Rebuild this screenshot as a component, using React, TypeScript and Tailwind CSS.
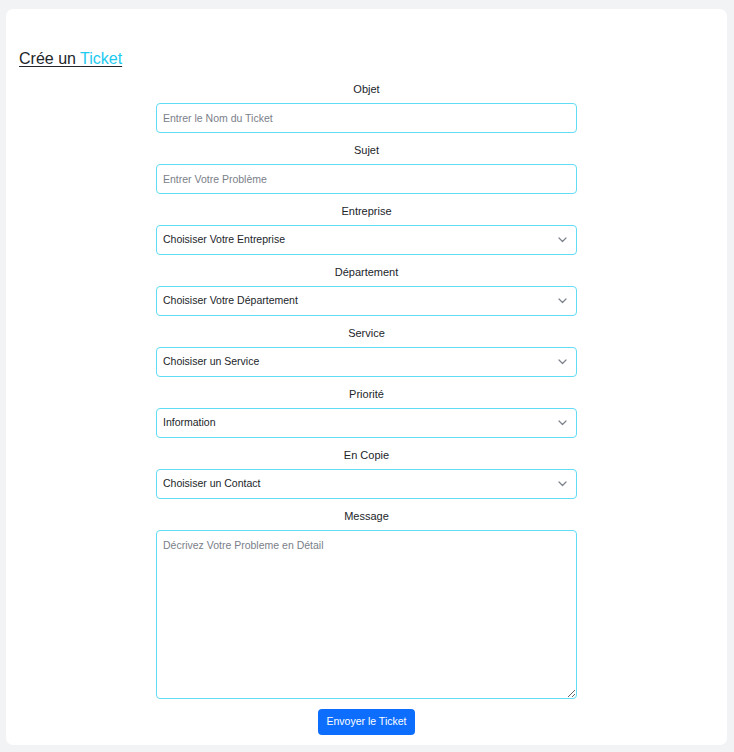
import React from 'react';

const ChevronDown = () => (
  <svg
    className="pointer-events-none absolute right-[10px] top-1/2 -translate-y-1/2"
    width="9"
    height="6"
    viewBox="0 0 9 6"
    fill="none"
  >
    <path d="M1 1l3.5 3.5L8 1" stroke="#7b818b" strokeWidth="1.2" strokeLinecap="round" strokeLinejoin="round" />
  </svg>
);

const Label = ({ children }: { children: React.ReactNode }) => (
  <label className="block text-center text-[11px] leading-[14px] text-[#212529] mb-[7px]">{children}</label>
);

const TextField = ({ label, placeholder }: { label: string; placeholder: string }) => (
  <div className="mb-[10px]">
    <Label>{label}</Label>
    <input
      type="text"
      placeholder={placeholder}
      className="block w-full h-[30px] px-[6px] text-[10.5px] text-[#212529] placeholder:text-[#7a8089] bg-white border border-[#62dcf4] rounded-[4px] outline-none"
    />
  </div>
);

const SelectField = ({ label, options }: { label: string; options: string[] }) => (
  <div className="mb-[10px]">
    <Label>{label}</Label>
    <div className="relative">
      <select className="block w-full h-[30px] pl-[6px] pr-6 text-[10.5px] text-[#212529] bg-white border border-[#62dcf4] rounded-[4px] outline-none appearance-none">
        {options.map((o) => (
          <option key={o}>{o}</option>
        ))}
      </select>
      <ChevronDown />
    </div>
  </div>
);

export default function App() {
  const selects = [
    { label: 'Entreprise', options: ['Choisiser Votre Entreprise'] },
    { label: 'Département', options: ['Choisiser Votre Département'] },
    { label: 'Service', options: ['Choisiser un Service'] },
    { label: 'Priorité', options: ['Information', 'Basse', 'Moyenne', 'Haute'] },
    { label: 'En Copie', options: ['Choisiser un Contact'] },
  ];

  return (
    <div className="min-h-[752px] bg-[#f2f3f5] pt-[9px] pb-[7px] pl-[6px] pr-[7px] font-['Liberation_Sans',Arial,sans-serif]">
      <div className="bg-white rounded-[7px] pt-[38px] pb-[10px] px-[13px]">
        <h1 className="text-[16px] leading-[24px] underline underline-offset-[2px] text-[#212529] mb-[11px]">
          Crée un <span className="text-[#1ccaf0]">Ticket</span>
        </h1>
        <form className="w-[421px] mx-auto" onSubmit={(e) => e.preventDefault()}>
          <TextField label="Objet" placeholder="Entrer le Nom du Ticket" />
          <TextField label="Sujet" placeholder="Entrer Votre Problème" />
          {selects.map((s) => (
            <SelectField key={s.label} label={s.label} options={s.options} />
          ))}
          <div>
            <Label>Message</Label>
            <textarea
              placeholder="Décrivez Votre Probleme en Détail"
              className="block w-full h-[169px] px-[6px] py-[7px] text-[10.5px] text-[#212529] placeholder:text-[#7a8089] bg-white border border-[#62dcf4] rounded-[4px] outline-none"
            />
          </div>
          <div className="flex justify-center mt-[10px]">
            <button
              type="submit"
              className="h-[26px] px-[9px] rounded-[4px] bg-[#0d6efd] text-white text-[10.5px]"
            >
              Envoyer le Ticket
            </button>
          </div>
        </form>
      </div>
    </div>
  );
}
